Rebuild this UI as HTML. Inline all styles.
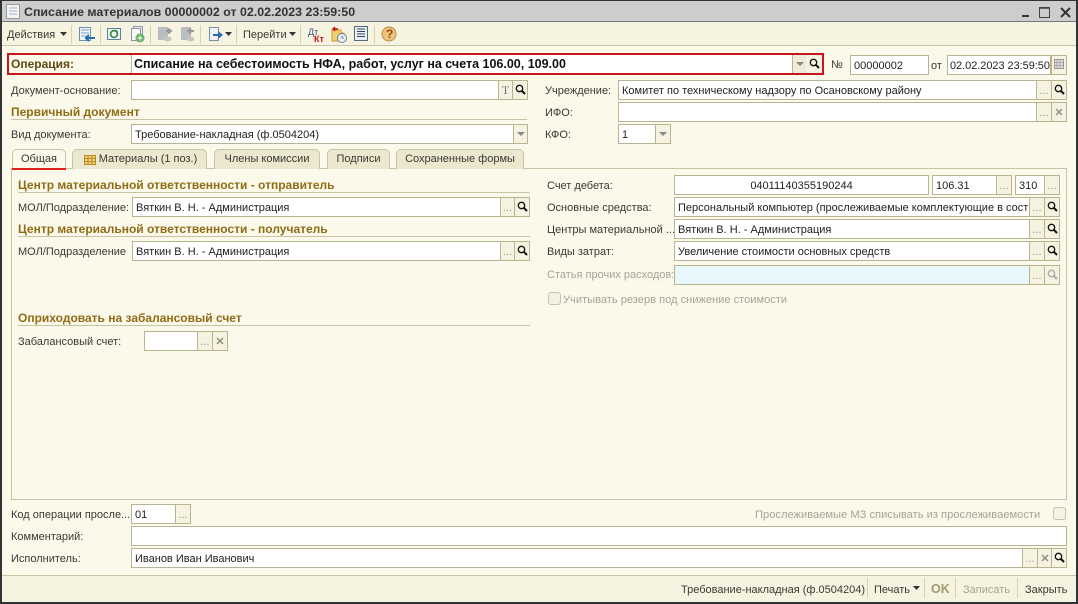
<!DOCTYPE html>
<html lang="ru"><head><meta charset="utf-8"><title>Списание материалов</title>
<style>
html,body{margin:0;padding:0;width:1078px;height:604px;overflow:hidden;background:#fbf9ea}
body{position:relative;font:11px "Liberation Sans","DejaVu Sans",sans-serif;color:#3a3a32}
.a,.t,.f,.b,.h,.l{position:absolute;box-sizing:border-box}
.t{white-space:nowrap;line-height:18px}
.f{background:#fff;border:1px solid #b8b492;height:20px;line-height:20px;padding-left:3px;white-space:nowrap;overflow:hidden;color:#222}
.b{background:#f5f2df;border:1px solid #b8b492;height:20px;line-height:20px;text-align:center;color:#999;font-size:11px}
.h{font-weight:bold;color:#8f6c17;font-size:12px;line-height:16px;white-space:nowrap}
.l{height:1px;background:#c7c3a4}
.tab{position:absolute;box-sizing:border-box;height:20px;background:#ebe8cf;border:1px solid #c7c3a4;border-bottom:0;border-radius:5px 5px 0 0;text-align:center;line-height:19px;color:#3a3a32;white-space:nowrap}
.sep{position:absolute;width:1px;background:#d5d1b5}
svg{position:absolute;display:block}
</style></head><body>

<!-- window frame -->
<div class="a" style="left:0;top:0;width:1078px;height:604px;border:1px solid #333;border-width:1px 2px 2px 2px"></div>
<div class="a" style="left:2px;top:1px;width:1074px;height:21px;background:#cdcdcd;border-bottom:1px solid #777"></div>
<svg style="left:6px;top:4px" width="15" height="16"><rect x=".5" y=".5" width="13" height="14" fill="#f4f4f4" stroke="#9a9a9a"/><path d="M3 4h8M3 7h8M3 10h8" stroke="#a8b4c4"/></svg>
<div class="t" style="left:24px;top:3px;font-size:12.4px;font-weight:bold;color:#333">Списание материалов 00000002 от 02.02.2023 23:59:50</div>
<svg style="left:1018px;top:5px" width="56" height="15"><path d="M4 11h7" stroke="#333" stroke-width="2"/><rect x="21.5" y="2.5" width="10" height="10" fill="none" stroke="#444"/><path d="M21 3h11" stroke="#444" stroke-width="1.500"/><path d="M43 3l9 9M52 3l-9 9" stroke="#333" stroke-width="2"/></svg>

<!-- toolbar -->
<div class="a" style="left:2px;top:22px;width:1074px;height:24px;background:#f6f3e0;border-bottom:1px solid #c7c3a4"></div>
<div class="t" style="left:7px;top:26px">Действия</div>
<svg style="left:60px;top:32px" width="7" height="4"><path d="M0 0h7L3.5 4z" fill="#333"/></svg>
<div class="sep" style="left:71px;top:25px;height:19px"></div>
<svg style="left:78px;top:26px" width="18" height="17"><rect x="1.5" y="1.5" width="11" height="13" fill="#eef3f9" stroke="#6c8fb8"/><path d="M3 4h8M3 7h8M3 10h6" stroke="#7f9cbf"/><path d="M17 12H8M11 9l-3 3 3 3" fill="none" stroke="#2468b0" stroke-width="2"/></svg>
<div class="sep" style="left:100px;top:25px;height:19px"></div>
<svg style="left:107px;top:27px" width="15" height="14"><rect x=".5" y="1.5" width="13" height="11" fill="#eef3f0" stroke="#5d7f9c"/><circle cx="7" cy="7" r="3.4" fill="none" stroke="#2d8a3e" stroke-width="1.6"/><path d="M9 2.5l2 2-2 1z" fill="#2d8a3e"/></svg>
<svg style="left:130px;top:26px" width="16" height="17"><rect x="3.5" y=".5" width="9" height="11" fill="#eee" stroke="#8d97a3"/><rect x="1.5" y="2.5" width="9" height="12" fill="#f6f6f6" stroke="#8d97a3"/><circle cx="10" cy="12" r="4.5" fill="#6cb26e"/><path d="M10 9.5v5M7.5 12h5" stroke="#fff"/></svg>
<div class="sep" style="left:150px;top:25px;height:19px"></div>
<svg style="left:157px;top:26px" width="16" height="17"><rect x="1" y="1" width="10" height="13" fill="#b9bcc0"/><path d="M9 5h5M11 2.500l3 2.500-3 2.500" fill="none" stroke="#999" stroke-width="2"/><ellipse cx="10.500" cy="13" rx="4" ry="2.500" fill="#c6c6bd"/></svg>
<svg style="left:180px;top:26px" width="16" height="17"><rect x="1" y="1" width="10" height="13" fill="#b9bcc0"/><path d="M14 5H9M11 2.500L8 5l3 2.500" fill="none" stroke="#999" stroke-width="2"/><ellipse cx="10.500" cy="13" rx="4" ry="2.500" fill="#c6c6bd"/></svg>
<div class="sep" style="left:200px;top:25px;height:19px"></div>
<svg style="left:208px;top:26px" width="16" height="17"><rect x="1.500" y="1.500" width="9" height="13" fill="#eef2f7" stroke="#7d8ea3"/><path d="M5 8h5V5l5 4-5 4v-3H5z" fill="#2b6cb0"/></svg>
<svg style="left:225px;top:32px" width="7" height="4"><path d="M0 0h7L3.500 4z" fill="#333"/></svg>
<div class="sep" style="left:236px;top:25px;height:19px"></div>
<div class="t" style="left:243px;top:26px">Перейти</div>
<svg style="left:289px;top:32px" width="7" height="4"><path d="M0 0h7L3.500 4z" fill="#333"/></svg>
<div class="sep" style="left:300px;top:25px;height:19px"></div>
<div class="t" style="left:308px;top:23px;font-size:9px;color:#3a5a80">Дт</div>
<div class="t" style="left:314px;top:30px;font-size:9px;font-weight:bold;color:#c01818">Кт</div>
<svg style="left:330px;top:26px" width="18" height="17"><path d="M2 4h9v3h3v8H2z" fill="#f2cf70" stroke="#c99b30"/><path d="M8 3H3M5 1L3 3l2 2" fill="none" stroke="#c01818" stroke-width="1.500"/><circle cx="12" cy="12" r="4.500" fill="#eef2f7" stroke="#6d8296"/><path d="M12 9.500V12h2" stroke="#6d8296" fill="none"/></svg>
<svg style="left:354px;top:26px" width="15" height="16"><rect x=".5" y=".5" width="13" height="14" fill="#eaf0f6" stroke="#55687d"/><path d="M3 3h8M3 5.500h8M3 8h8M3 10.500h8" stroke="#33475c"/></svg>
<div class="sep" style="left:374px;top:25px;height:19px"></div>
<svg style="left:381px;top:26px" width="16" height="16"><circle cx="8" cy="8" r="7" fill="#eec47c" stroke="#b98c45"/></svg>
<div class="t" style="left:386px;top:25px;font-weight:bold;color:#a04a10;font-size:12px">?</div>

<!-- operation -->
<div class="a" style="left:7px;top:53px;width:817px;height:22px;border:2px solid #c8171c"></div>
<div class="t" style="left:11px;top:55px;font-weight:bold;color:#5c4a10;font-size:12px">Операция:</div>
<div class="f" style="left:131px;top:55px;width:662px;height:18px;border-width:0 0 0 1px;font-weight:bold;font-size:12.5px;color:#111;line-height:18px;padding-left:2px">Списание на себестоимость НФА, работ, услуг на счета 106.00, 109.00</div>
<div class="b" style="left:792px;top:55px;width:15px;height:18px;border-width:0 1px;background:#eeebd6"></div>
<svg style="left:796px;top:62px" width="8" height="4"><path d="M0 0h8L4 4z" fill="#888"/></svg>
<div class="b" style="left:806px;top:55px;width:16px;height:18px;border-width:0"></div>

<div class="t" style="left:831px;top:56px">№</div>
<div class="f" style="left:850px;top:55px;width:79px">00000002</div>
<div class="t" style="left:931px;top:57px">от</div>
<div class="f" style="left:947px;top:55px;width:104px;padding-left:2px;font-size:10.900px">02.02.2023 23:59:50</div>
<div class="b" style="left:1051px;top:55px;width:16px"></div>
<svg style="left:1054px;top:59px" width="11" height="11"><rect x=".5" y=".5" width="9" height="9" fill="#ddd" stroke="#999"/><path d="M3 1v8M6 1v8M1 3.500h8M1 6.500h8" stroke="#aaa"/></svg>

<!-- row 2 -->
<div class="t" style="left:11px;top:82px">Документ-основание:</div>
<div class="f" style="left:131px;top:80px;width:368px"></div>
<div class="b" style="left:498px;top:80px;width:15px;font-family:'Liberation Serif',serif;font-size:12px;line-height:18px;color:#777">T</div>
<div class="b" style="left:512px;top:80px;width:16px"></div>
<div class="t" style="left:545px;top:82px">Учреждение:</div>
<div class="f" style="left:618px;top:80px;width:419px">Комитет по техническому надзору по Осановскому району</div>
<div class="b" style="left:1036px;top:80px;width:16px">...</div>
<div class="b" style="left:1051px;top:80px;width:16px"></div>

<div class="h" style="left:11px;top:104px">Первичный документ</div>
<div class="l" style="left:11px;top:119px;width:516px"></div>
<div class="t" style="left:545px;top:104px">ИФО:</div>
<div class="f" style="left:618px;top:102px;width:419px"></div>
<div class="b" style="left:1036px;top:102px;width:16px">...</div>
<div class="b" style="left:1051px;top:102px;width:16px"></div>

<div class="t" style="left:11px;top:126px">Вид документа:</div>
<div class="f" style="left:131px;top:124px;width:383px">Требование-накладная (ф.0504204)</div>
<div class="b" style="left:513px;top:124px;width:15px"></div>
<svg style="left:517px;top:132px" width="8" height="4"><path d="M0 0h8L4 4z" fill="#888"/></svg>
<div class="t" style="left:545px;top:126px">КФО:</div>
<div class="f" style="left:618px;top:124px;width:38px">1</div>
<div class="b" style="left:655px;top:124px;width:16px"></div>
<svg style="left:659px;top:132px" width="8" height="4"><path d="M0 0h8L4 4z" fill="#888"/></svg>

<!-- tabs -->
<div class="a" style="left:11px;top:168px;width:1056px;height:332px;border:1px solid #c7c3a4;background:#fbf9ea"></div>
<div class="tab" style="left:12px;top:149px;width:54px;background:#fbf9ea;height:20px">Общая</div>
<div class="a" style="left:12px;top:168px;width:54px;height:2px;background:#e01f1f"></div>
<div class="tab" style="left:72px;top:149px;width:135px;padding-left:17px">Материалы (1 поз.)</div>
<svg style="left:84px;top:155px" width="13" height="11"><rect x=".5" y=".5" width="11" height="9" fill="#f3cf6e" stroke="#b88a2a"/><path d="M4 1v8M8 1v8M1 3.500h10M1 6.500h10" stroke="#b88a2a"/></svg>
<div class="tab" style="left:214px;top:149px;width:106px">Члены комиссии</div>
<div class="tab" style="left:327px;top:149px;width:63px">Подписи</div>
<div class="tab" style="left:396px;top:149px;width:128px">Сохраненные формы</div>

<!-- left column -->
<div class="h" style="left:18px;top:177px">Центр материальной ответственности - отправитель</div>
<div class="l" style="left:18px;top:192px;width:512px"></div>
<div class="t" style="left:18px;top:199px">МОЛ/Подразделение:</div>
<div class="f" style="left:132px;top:197px;width:369px">Вяткин В. Н. - Администрация</div>
<div class="b" style="left:500px;top:197px;width:15px">...</div>
<div class="b" style="left:514px;top:197px;width:16px"></div>
<div class="h" style="left:18px;top:221px">Центр материальной ответственности - получатель</div>
<div class="l" style="left:18px;top:236px;width:512px"></div>
<div class="t" style="left:18px;top:243px">МОЛ/Подразделение</div>
<div class="f" style="left:132px;top:241px;width:369px">Вяткин В. Н. - Администрация</div>
<div class="b" style="left:500px;top:241px;width:15px">...</div>
<div class="b" style="left:514px;top:241px;width:16px"></div>
<div class="h" style="left:18px;top:310px">Оприходовать на забалансовый счет</div>
<div class="l" style="left:18px;top:325px;width:512px"></div>
<div class="t" style="left:18px;top:333px">Забалансовый счет:</div>
<div class="f" style="left:144px;top:331px;width:54px"></div>
<div class="b" style="left:197px;top:331px;width:16px">...</div>
<div class="b" style="left:212px;top:331px;width:16px"></div>

<!-- right column -->
<div class="t" style="left:547px;top:177px">Счет дебета:</div>
<div class="f" style="left:674px;top:175px;width:255px;text-align:center;padding:0">04011140355190244</div>
<div class="f" style="left:932px;top:175px;width:65px">106.31</div>
<div class="b" style="left:996px;top:175px;width:16px">...</div>
<div class="f" style="left:1015px;top:175px;width:30px">310</div>
<div class="b" style="left:1044px;top:175px;width:16px">...</div>
<div class="t" style="left:547px;top:199px">Основные средства:</div>
<div class="f" style="left:674px;top:197px;width:356px">Персональный компьютер (прослеживаемые комплектующие в сост</div>
<div class="b" style="left:1029px;top:197px;width:16px">...</div>
<div class="b" style="left:1044px;top:197px;width:16px"></div>
<div class="t" style="left:547px;top:221px">Центры материальной ...</div>
<div class="f" style="left:674px;top:219px;width:356px">Вяткин В. Н. - Администрация</div>
<div class="b" style="left:1029px;top:219px;width:16px">...</div>
<div class="b" style="left:1044px;top:219px;width:16px"></div>
<div class="t" style="left:547px;top:243px">Виды затрат:</div>
<div class="f" style="left:674px;top:241px;width:356px">Увеличение стоимости основных средств</div>
<div class="b" style="left:1029px;top:241px;width:16px">...</div>
<div class="b" style="left:1044px;top:241px;width:16px"></div>
<div class="t" style="left:547px;top:266px;color:#a5a594">Статья прочих расходов:</div>
<div class="f" style="left:674px;top:265px;width:356px;background:#e8f7fb"></div>
<div class="b" style="left:1029px;top:265px;width:16px">...</div>
<div class="b" style="left:1044px;top:265px;width:16px"></div>
<div class="a" style="left:548px;top:292px;width:13px;height:13px;border:1px solid #c7c3a4;border-radius:3px;background:#f5f2e2"></div>
<div class="t" style="left:563px;top:291px;color:#a5a594;font-size:11.100px">Учитывать резерв под снижение стоимости</div>

<!-- bottom -->
<div class="t" style="left:11px;top:506px">Код операции просле...</div>
<div class="f" style="left:131px;top:504px;width:45px">01</div>
<div class="b" style="left:175px;top:504px;width:16px">...</div>
<div class="t" style="left:755px;top:506px;color:#a5a594;font-size:11.150px">Прослеживаемые МЗ списывать из прослеживаемости</div>
<div class="a" style="left:1053px;top:507px;width:13px;height:13px;border:1px solid #c7c3a4;border-radius:3px;background:#f5f2e2"></div>
<div class="t" style="left:11px;top:528px">Комментарий:</div>
<div class="f" style="left:131px;top:526px;width:936px"></div>
<div class="t" style="left:11px;top:550px">Исполнитель:</div>
<div class="f" style="left:131px;top:548px;width:892px">Иванов Иван Иванович</div>
<div class="b" style="left:1022px;top:548px;width:16px">...</div>
<div class="b" style="left:1037px;top:548px;width:15px"></div>
<div class="b" style="left:1051px;top:548px;width:16px"></div>

<!-- status bar -->
<div class="a" style="left:2px;top:575px;width:1074px;height:27px;background:#f6f3e0;border-top:1px solid #c7c3a4"></div>
<div class="t" style="left:681px;top:581px">Требование-накладная (ф.0504204)</div>
<div class="sep" style="left:867px;top:578px;height:20px"></div>
<div class="t" style="left:874px;top:581px">Печать</div>
<svg style="left:913px;top:586px" width="7" height="4"><path d="M0 0h7L3.500 4z" fill="#333"/></svg>
<div class="sep" style="left:924px;top:578px;height:20px"></div>
<div class="t" style="left:931px;top:580px;font-weight:bold;font-size:12.500px;color:#a09a70">OK</div>
<div class="sep" style="left:955px;top:578px;height:20px"></div>
<div class="t" style="left:963px;top:581px;color:#a5a594">Записать</div>
<div class="sep" style="left:1017px;top:578px;height:20px"></div>
<div class="t" style="left:1025px;top:581px">Закрыть</div>

<!-- magnifiers -->
<svg width="0" height="0" style="position:absolute"><defs><g id="m"><circle cx="4.500" cy="4.500" r="3.200" fill="none" stroke="currentColor" stroke-width="1.300"/><path d="M7 7l3 3" stroke="currentColor" stroke-width="2"/></g><g id="x"><path d="M1 1l6 6M7 1L1 7" stroke="#8a8a80" stroke-width="1.400"/></g></defs></svg>
<svg style="left:809px;top:58px;color:#111" width="11" height="11"><use href="#m"/></svg>
<svg style="left:515px;top:84px;color:#111" width="11" height="11"><use href="#m"/></svg>
<svg style="left:1054px;top:84px;color:#111" width="11" height="11"><use href="#m"/></svg>
<svg style="left:517px;top:201px;color:#111" width="11" height="11"><use href="#m"/></svg>
<svg style="left:517px;top:245px;color:#111" width="11" height="11"><use href="#m"/></svg>
<svg style="left:1047px;top:201px;color:#111" width="11" height="11"><use href="#m"/></svg>
<svg style="left:1047px;top:223px;color:#111" width="11" height="11"><use href="#m"/></svg>
<svg style="left:1047px;top:245px;color:#111" width="11" height="11"><use href="#m"/></svg>
<svg style="left:1047px;top:269px;color:#aaa" width="11" height="11"><use href="#m"/></svg>
<svg style="left:1054px;top:552px;color:#111" width="11" height="11"><use href="#m"/></svg>
<svg style="left:1055px;top:108px" width="8" height="8"><use href="#x"/></svg>
<svg style="left:216px;top:337px" width="8" height="8"><use href="#x"/></svg>
<svg style="left:1041px;top:554px" width="8" height="8"><use href="#x"/></svg>
</body></html>
